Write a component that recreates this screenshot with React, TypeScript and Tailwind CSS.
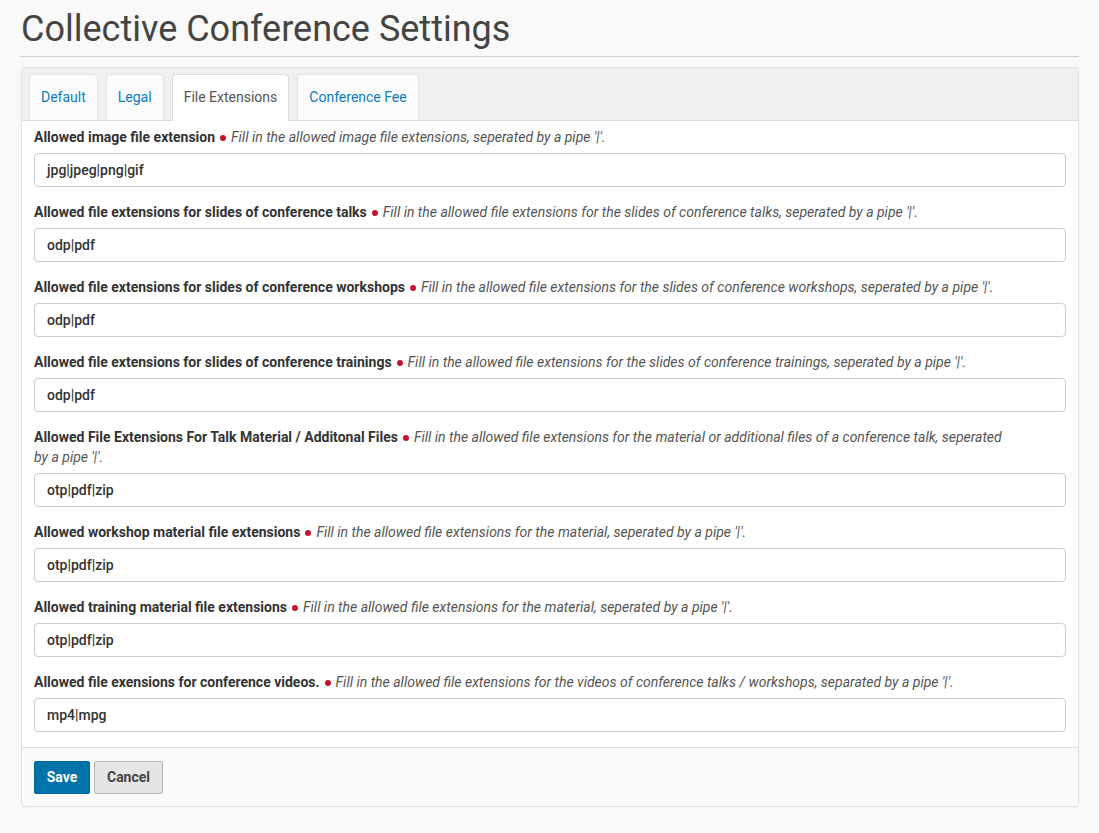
const fields = [
  {
    label: "Allowed image file extension",
    hint: "Fill in the allowed image file extensions, seperated by a pipe '|'.",
    value: "jpg|jpeg|png|gif",
  },
  {
    label: "Allowed file extensions for slides of conference talks",
    hint: "Fill in the allowed file extensions for the slides of conference talks, seperated by a pipe '|'.",
    value: "odp|pdf",
  },
  {
    label: "Allowed file extensions for slides of conference workshops",
    hint: "Fill in the allowed file extensions for the slides of conference workshops, seperated by a pipe '|'.",
    value: "odp|pdf",
  },
  {
    label: "Allowed file extensions for slides of conference trainings",
    hint: "Fill in the allowed file extensions for the slides of conference trainings, seperated by a pipe '|'.",
    value: "odp|pdf",
  },
  {
    label: "Allowed File Extensions For Talk Material / Additonal Files",
    hint: "Fill in the allowed file extensions for the material or additional files of a conference talk, seperated",
    hint2: "by a pipe '|'.",
    value: "otp|pdf|zip",
  },
  {
    label: "Allowed workshop material file extensions",
    hint: "Fill in the allowed file extensions for the material, seperated by a pipe '|'.",
    value: "otp|pdf|zip",
  },
  {
    label: "Allowed training material file extensions",
    hint: "Fill in the allowed file extensions for the material, seperated by a pipe '|'.",
    value: "otp|pdf|zip",
  },
  {
    label: "Allowed file exensions for conference videos.",
    hint: "Fill in the allowed file extensions for the videos of conference talks / workshops, separated by a pipe '|'.",
    value: "mp4|mpg",
  },
];

const tabs = ["Default", "Legal", "File Extensions", "Conference Fee"];

export default function App() {
  return (
    <div className="min-h-[833px] bg-[#f9f9f9] px-5 pt-[9px] pb-6 font-['Roboto',sans-serif] text-[#333]">
      <h1 className="text-[36px] leading-[40px] text-[#444] pl-[1px]">Collective Conference Settings</h1>
      <div className="mt-[7px] border-t border-[#cfcfcf]" />

      <div className="mt-[10px] ml-[1px] rounded border border-[#e2e2e2] bg-white shadow-[0_1px_2px_rgba(0,0,0,0.04)]">
        <div className="flex gap-2 bg-[#f0f0f0] px-[7px] pt-[6px] rounded-t border-b border-[#dedede]">
          {tabs.map((t) => {
            const active = t === "File Extensions";
            return (
              <div
                key={t}
                className={
                  active
                    ? "-mb-px h-[47px] rounded-t border border-b-0 border-[#dedede] bg-white px-[11px] pt-[12px] text-[14px] text-[#555]"
                    : "h-[46px] rounded-t border border-b-0 border-[#e4e4e4] bg-[#fcfcfc] px-[11px] pt-[12px] text-[14px] text-[#0a7dbd]"
                }
              >
                {t}
              </div>
            );
          })}
        </div>

        <div className="px-3 pt-[6px]">
          {fields.map((f) => (
            <div key={f.label} className="mb-[15px]">
              <div className="mb-[6px] text-[14px] leading-[20px]">
                <span className="font-bold text-[#333]">{f.label}</span>
                <span className="mx-[5px] inline-block h-[6px] w-[6px] rounded-full bg-[#c4122f] align-middle" />
                <span className="italic text-[#555]">{f.hint}</span>
                {f.hint2 && (
                  <>
                    <br />
                    <span className="italic text-[#555]">{f.hint2}</span>
                  </>
                )}
              </div>
              <div className="flex h-[34px] items-center rounded border border-[#cccccc] bg-white px-3 text-[14px] font-medium text-[#333]">
                {f.value}
              </div>
            </div>
          ))}
        </div>

        <div className="flex gap-1 rounded-b border-t border-[#dedede] bg-[#fafafa] px-3 pt-[13px] pb-3">
          <button className="h-[33px] w-[56px] rounded-[2px] border border-[#006799] bg-[#0073aa] text-[14px] font-bold text-white">
            Save
          </button>
          <button className="h-[33px] w-[69px] rounded-[2px] border border-[#b5b5b5] bg-[#e6e6e6] text-[14px] font-bold text-[#444]">
            Cancel
          </button>
        </div>
      </div>
    </div>
  );
}
